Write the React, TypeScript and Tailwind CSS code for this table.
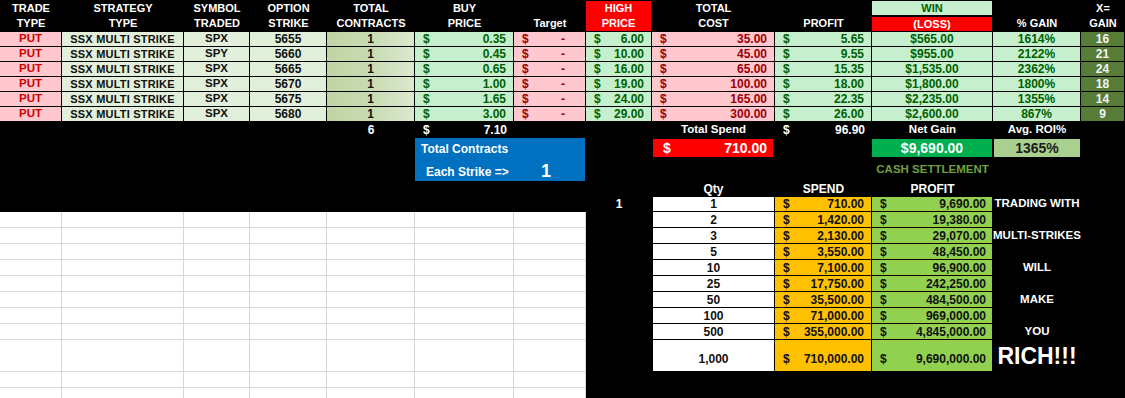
import React from "react";

type Row = {
  sym: string;
  strike: string;
  buy: string;
  high: string;
  cost: string;
  profit: string;
  win: string;
  gain: string;
  x: string;
};

const rows: Row[] = [
  { sym: "SPX", strike: "5655", buy: "0.35", high: "6.00", cost: "35.00", profit: "5.65", win: "$565.00", gain: "1614%", x: "16" },
  { sym: "SPY", strike: "5660", buy: "0.45", high: "10.00", cost: "45.00", profit: "9.55", win: "$955.00", gain: "2122%", x: "21" },
  { sym: "SPX", strike: "5665", buy: "0.65", high: "16.00", cost: "65.00", profit: "15.35", win: "$1,535.00", gain: "2362%", x: "24" },
  { sym: "SPX", strike: "5670", buy: "1.00", high: "19.00", cost: "100.00", profit: "18.00", win: "$1,800.00", gain: "1800%", x: "18" },
  { sym: "SPX", strike: "5675", buy: "1.65", high: "24.00", cost: "165.00", profit: "22.35", win: "$2,235.00", gain: "1355%", x: "14" },
  { sym: "SPX", strike: "5680", buy: "3.00", high: "29.00", cost: "300.00", profit: "26.00", win: "$2,600.00", gain: "867%", x: "9" },
];

const qty: [string, string, string, string][] = [
  ["1", "710.00", "9,690.00", "TRADING WITH"],
  ["2", "1,420.00", "19,380.00", ""],
  ["3", "2,130.00", "29,070.00", "MULTI-STRIKES"],
  ["5", "3,550.00", "48,450.00", ""],
  ["10", "7,100.00", "96,900.00", "WILL"],
  ["25", "17,750.00", "242,250.00", ""],
  ["50", "35,500.00", "484,500.00", "MAKE"],
  ["100", "71,000.00", "969,000.00", ""],
  ["500", "355,000.00", "4,845,000.00", "YOU"],
  ["1,000", "710,000.00", "9,690,000.00", "RICH!!!"],
];

function Head({ a, b }: { a: string; b: string }) {
  return (
    <div className="flex flex-col items-center justify-center text-white text-[11px] leading-[15px] whitespace-nowrap">
      <span>{a || "\u00a0"}</span>
      <span>{b}</span>
    </div>
  );
}

const cellB = "border-b border-r border-black";

function Acct({ v, cls }: { v: string; cls: string }) {
  return (
    <div className={`${cellB} ${cls} flex items-center justify-between pl-[8px] pr-[7px] text-[12px] leading-none`}>
      <span>$</span>
      <span>{v}</span>
    </div>
  );
}

function Blank() {
  return <div />;
}

function WhiteCell() {
  return <div className="bg-white border-b border-r border-[#d6d6d6]" />;
}

export default function App() {
  return (
    <div className="w-[1125px] h-[398px] overflow-hidden bg-black font-['Liberation_Sans',Arial,sans-serif] font-bold">
      <div className="grid grid-cols-[62px_122px_66px_77px_88px_99px_72px_66px_123px_97px_121px_88px_44px] grid-rows-[32px_repeat(6,15px)_15px_22px_22px_15px_repeat(9,16px)_32px_16px_16px]">
        {/* header */}
        <Head a="TRADE" b="TYPE" />
        <Head a="STRATEGY" b="TYPE" />
        <Head a="SYMBOL" b="TRADED" />
        <Head a="OPTION" b="STRIKE" />
        <Head a="TOTAL" b="CONTRACTS" />
        <Head a="BUY" b="PRICE" />
        <Head a="" b="Target" />
        <div className="mt-px mb-px mr-px bg-[#ff0000] flex flex-col items-center justify-center text-white text-[11px] leading-[15px]">
          <span>HIGH</span>
          <span>PRICE</span>
        </div>
        <Head a="TOTAL" b="COST" />
        <Head a="" b="PROFIT" />
        <div className="flex flex-col pt-px mr-px">
          <div className="h-[14px] bg-[#c6efce] text-[#006100] text-[11px] flex items-center justify-center">WIN</div>
          <div className="h-[14px] mt-[2px] bg-[#ff0000] text-white text-[11px] flex items-center justify-center">(LOSS)</div>
        </div>
        <Head a="" b="% GAIN" />
        <Head a="X=" b="GAIN" />

        {/* data rows */}
        {rows.map((r, i) => (
          <React.Fragment key={i}>
            <div className={`${cellB} bg-[#ffc7ce] text-[#d00000] text-[11.5px] flex items-center justify-center`}>PUT</div>
            <div className={`${cellB} bg-[#e2efda] text-[#111] text-[11px] tracking-[0.2px] flex items-center justify-center whitespace-nowrap`}>SSX MULTI STRIKE</div>
            <div className={`${cellB} bg-[#e2efda] text-[#111] text-[11.5px] flex items-center justify-center`}>{r.sym}</div>
            <div className={`${cellB} bg-[#e2efda] text-[#111] text-[12px] flex items-center justify-center`}>{r.strike}</div>
            <div className={`${cellB} bg-gradient-to-r from-[#c0d5a5] via-[#c8dbb0] to-[#dce9cf] text-[#111] text-[12px] flex items-center justify-center`}>1</div>
            <Acct v={r.buy} cls="bg-[#c6efce] text-[#006100]" />
            <div className={`${cellB} bg-[#ffc7ce] text-[#9c0006] flex items-center justify-between pl-[8px] pr-[20px] text-[12px] leading-none`}>
              <span>$</span>
              <span>-</span>
            </div>
            <Acct v={r.high} cls="bg-[#c6efce] text-[#006100]" />
            <Acct v={r.cost} cls="bg-[#ffc7ce] text-[#9c0006]" />
            <Acct v={r.profit} cls="bg-[#c6efce] text-[#006100]" />
            <div className={`${cellB} bg-[#c6efce] text-[#006100] text-[12px] flex items-center justify-center`}>{r.win}</div>
            <div className={`${cellB} bg-[#c6efce] text-[#006100] text-[12px] flex items-center justify-center`}>{r.gain}</div>
            <div className={`${cellB} bg-[#567c37] text-[#f4f4f4] text-[12px] flex items-center justify-center`}>{r.x}</div>
          </React.Fragment>
        ))}

        {/* sum row */}
        <Blank />
        <Blank />
        <Blank />
        <Blank />
        <div className="text-white text-[12px] flex items-center justify-center">6</div>
        <div className="text-white text-[12px] flex items-center justify-between pl-[8px] pr-[7px]">
          <span>$</span>
          <span>7.10</span>
        </div>
        <Blank />
        <Blank />
        <div className="text-white text-[11.5px] flex items-center justify-center">Total Spend</div>
        <div className="text-white text-[12px] flex items-center justify-between pl-[8px] pr-[7px]">
          <span>$</span>
          <span>96.90</span>
        </div>
        <div className="text-white text-[11.5px] flex items-center justify-center">Net Gain</div>
        <div className="text-white text-[11.5px] flex items-center justify-center">Avg. ROI%</div>
        <Blank />

        {/* row a */}
        <div className="col-span-5" />
        <div className="col-span-2 row-span-2 mt-px mr-px bg-[#0070c0] text-white flex flex-col">
          <div className="h-[22px] flex items-center pl-[6px] pt-[2px] text-[12px]">Total Contracts</div>
          <div className="flex-1 grid grid-cols-[98px_1fr]">
            <div className="flex items-center pl-[11px] text-[12px] whitespace-nowrap">Each Strike =&gt;</div>
            <div className="flex items-center justify-center pr-[6px] text-[18px]">1</div>
          </div>
        </div>
        <Blank />
        <div className="my-[2px] ml-px mr-[2px] bg-[#ff0000] text-white text-[14px] flex items-center justify-between pl-[10px] pr-[6px]">
          <span>$</span>
          <span>710.00</span>
        </div>
        <Blank />
        <div className="my-[2px] mr-px bg-[#00b050] text-white text-[14px] flex items-center justify-center">$9,690.00</div>
        <div className="my-[2px] ml-px mr-px bg-[#a9d08e] text-[#1c1c1c] text-[14px] flex items-center justify-center">1365%</div>
        <Blank />

        {/* row b */}
        <div className="col-span-5" />
        <Blank />
        <Blank />
        <Blank />
        <div className="text-[#6f9f3f] text-[11.5px] flex items-end justify-center pb-[3px] whitespace-nowrap">CASH SETTLEMENT</div>
        <Blank />
        <Blank />

        {/* row c */}
        <div className="col-span-8" />
        <div className="text-white text-[12px] flex items-center justify-center">Qty</div>
        <div className="text-white text-[12px] flex items-center justify-center">SPEND</div>
        <div className="text-white text-[12px] flex items-center justify-center">PROFIT</div>
        <Blank />
        <Blank />

        {/* qty rows */}
        {qty.map((q, i) => {
          const big = i === 9;
          return (
            <React.Fragment key={i}>
              {i === 0 ? (
                <div className="col-span-7" />
              ) : (
                <>
                  <WhiteCell />
                  <WhiteCell />
                  <WhiteCell />
                  <WhiteCell />
                  <WhiteCell />
                  <WhiteCell />
                  <WhiteCell />
                </>
              )}
              <div className="text-white text-[12px] flex items-center justify-center">{i === 0 ? "1" : ""}</div>
              <div className={`bg-white border-l border-r border-b border-black ${i === 0 ? "border-t" : ""} text-[#111] text-[12px] flex justify-center ${big ? "items-center pt-[6px]" : "items-center"}`}>
                {q[0]}
              </div>
              <div className={`bg-[#ffc000] border-r border-b border-black ${i === 0 ? "border-t" : ""} text-[#111] text-[12px] flex justify-between pl-[8px] pr-[7px] ${big ? "items-center pt-[6px]" : "items-center"}`}>
                <span>$</span>
                <span>{q[1]}</span>
              </div>
              <div className={`bg-[#92d050] border-r border-b border-black ${i === 0 ? "border-t" : ""} text-[#111] text-[12px] flex justify-between pl-[8px] pr-[6px] ${big ? "items-center pt-[6px]" : "items-center"}`}>
                <span>$</span>
                <span>{q[2]}</span>
              </div>
              <div className={`text-white flex items-center justify-center whitespace-nowrap ${big ? "text-[23px] pt-[1px]" : "text-[11.5px]"}`}>
                {q[3]}
              </div>
              <Blank />
            </React.Fragment>
          );
        })}

        {/* trailing white rows */}
        {[0, 1].map((k) => (
          <React.Fragment key={k}>
            <WhiteCell />
            <WhiteCell />
            <WhiteCell />
            <WhiteCell />
            <WhiteCell />
            <WhiteCell />
            <WhiteCell />
            <div className="col-span-6" />
          </React.Fragment>
        ))}
      </div>
    </div>
  );
}
